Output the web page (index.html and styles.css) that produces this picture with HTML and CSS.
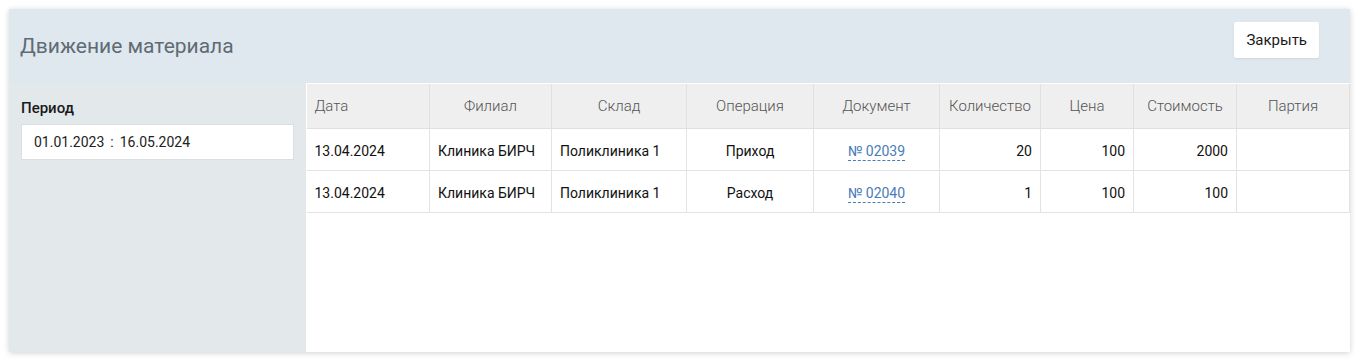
FILE: index.html
```html
<!DOCTYPE html>
<html lang="ru">
<head>
  <meta charset="UTF-8" />
  <title>Движение материала</title>
  <link rel="stylesheet" href="styles.css">
</head>
<body>

  <div class="panel">
    <header class="panel-head">
      <h1>Движение материала</h1>
      <button class="close-btn">Закрыть</button>
    </header>

    <div class="panel-body">
      <aside class="filter">
        <label class="filter-label">Период</label>
        <div class="period">01.01.2023 <span class="sep">:</span> 16.05.2024</div>
      </aside>

      <div class="table-wrap">
        <table class="moves">
          <colgroup>
            <col style="width:123px"><col style="width:122px"><col style="width:135px">
            <col style="width:127px"><col style="width:126px"><col style="width:101px">
            <col style="width:93px"><col style="width:103px"><col style="width:113px">
          </colgroup>
          <thead>
            <tr>
              <th class="left">Дата</th>
              <th>Филиал</th>
              <th>Склад</th>
              <th>Операция</th>
              <th>Документ</th>
              <th>Количество</th>
              <th>Цена</th>
              <th>Стоимость</th>
              <th>Партия</th>
            </tr>
          </thead>
          <tbody>
            <tr>
              <td>13.04.2024</td>
              <td>Клиника БИРЧ</td>
              <td>Поликлиника 1</td>
              <td class="center">Приход</td>
              <td class="center"><a href="#" class="doc">№ 02039</a></td>
              <td class="num">20</td>
              <td class="num">100</td>
              <td class="num">2000</td>
              <td></td>
            </tr>
            <tr>
              <td>13.04.2024</td>
              <td>Клиника БИРЧ</td>
              <td>Поликлиника 1</td>
              <td class="center">Расход</td>
              <td class="center"><a href="#" class="doc">№ 02040</a></td>
              <td class="num">1</td>
              <td class="num">100</td>
              <td class="num">100</td>
              <td></td>
            </tr>
          </tbody>
        </table>
      </div>
    </div>
  </div>

</body>
</html>
```

FILE: styles.css
```css
* {
  box-sizing: border-box;
}

body {
  margin: 0;
  padding: 9px 10px 10px 9px;
  background: #ffffff;
  font-family: Roboto, "Noto Sans", sans-serif;
  color: #1a1a1a;
}

.panel {
  height: 343px;
  display: flex;
  flex-direction: column;
  background: #ffffff;
  box-shadow: 0 1px 6px rgba(0, 0, 0, 0.18);
}

.panel-head {
  height: 74px;
  display: flex;
  align-items: center;
  justify-content: space-between;
  padding: 0 31px 0 11px;
  background: #dfe8ef;
}

.panel-head h1 {
  margin: 0;
  font-size: 21px;
  font-weight: 400;
  color: #5f6b74;
}

.close-btn {
  margin-top: -12px;
  height: 36px;
  padding: 0 12px;
  background: #ffffff;
  border: none;
  border-radius: 2px;
  box-shadow: 0 1px 2px rgba(0, 0, 0, 0.08);
  font-family: inherit;
  font-size: 15px;
  color: #1a1a1a;
  cursor: pointer;
}

.panel-body {
  flex: 1;
  display: flex;
  gap: 1px;
  background: #ffffff;
}

.filter {
  width: 298px;
  padding: 16px 12px;
  background: #e3e8ea;
}

.filter-label {
  display: block;
  margin-bottom: 7px;
  font-size: 15px;
  font-weight: 500;
  color: #1a1a1a;
}

.period {
  height: 36px;
  display: flex;
  align-items: center;
  padding: 0 12px;
  background: #ffffff;
  border: 1px solid #dcdfe1;
  font-size: 14px;
  color: #222;
}

.period .sep {
  margin: 0 6px;
}

.table-wrap {
  flex: 1;
  padding-top: 1px;
}

.moves {
  width: 1043px;
  border-collapse: collapse;
  table-layout: fixed;
  font-size: 14px;
}

.moves th {
  height: 44px;
  padding: 0 8px;
  background: #efefef;
  border: 1px solid #e0e0e0;
  border-top: none;
  font-weight: 300;
  font-size: 15px;
  color: #555;
  text-align: center;
}

.moves th:first-child,
.moves td:first-child {
  border-left: none;
}

.moves th.left {
  text-align: left;
}

.moves td {
  height: 42px;
  padding: 3px 8px 0;
  border: 1px solid #e3e3e3;
  color: #111;
  white-space: nowrap;
}

.moves td.center {
  text-align: center;
}

.moves td.num {
  text-align: right;
}

.doc {
  color: #4a7bb8;
  text-decoration: none;
  border-bottom: 1px dashed #4a7bb8;
  padding-bottom: 1px;
}
```
